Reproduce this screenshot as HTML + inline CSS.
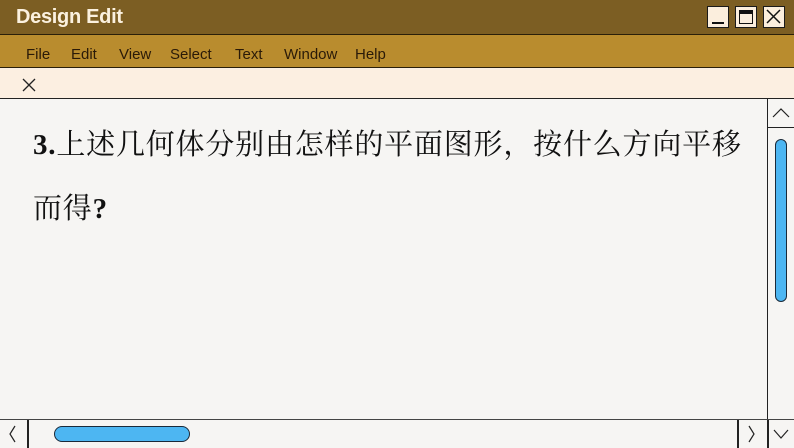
<!DOCTYPE html>
<html><head><meta charset="utf-8"><style>
*{margin:0;padding:0;box-sizing:border-box}
body{width:794px;height:447px;overflow:hidden;background:#f6f5f3;position:relative;font-family:"Liberation Sans",sans-serif}
.title{position:absolute;left:0;top:0;width:794px;height:35px;background:#7c5e23;border-bottom:1px solid #2a1f0a}
.title span{position:absolute;left:16px;top:6px;color:#fbf1df;font-weight:bold;font-size:20px;letter-spacing:-0.3px}
.btn{position:absolute;top:6px;width:22px;height:22px;background:#fbeedd;border:1.5px solid #1a1a1a}
.menu{position:absolute;left:0;top:35px;width:794px;height:33px;background:#b98c2e;border-bottom:1px solid #2a1f0a}
.menu span{position:absolute;top:11px;font-size:15px;color:#2a1a08}
.tool{position:absolute;left:0;top:68px;width:794px;height:31px;background:#fcefe1;border-bottom:1.5px solid #222}
.content{position:absolute;left:33px;top:113px;font-size:29px;line-height:64px;color:#111;font-family:"Liberation Serif","Noto Serif CJK SC",serif;letter-spacing:0.8px;white-space:nowrap}
.vs{position:absolute;left:767px;top:99px;width:27px;height:322px;border-left:1.5px solid #222}
.hs{position:absolute;left:0;top:419px;width:794px;height:28px;border-top:1.5px solid #444}
</style></head><body>
<div class="title"><span>Design Edit</span>
<div class="btn" style="left:707px"><div style="position:absolute;left:4px;right:4px;bottom:3px;height:2px;background:#111"></div></div>
<div class="btn" style="left:735px"><div style="position:absolute;left:3px;right:3px;top:3px;bottom:3px;border:1.5px solid #111;border-top-width:4px"></div></div>
<div class="btn" style="left:763px"><svg width="19" height="19" style="position:absolute;left:0;top:0"><path d="M3 3L16 16M16 3L3 16" stroke="#111" stroke-width="1.5"/></svg></div>
</div>
<div class="menu">
<span style="left:26px">File</span><span style="left:71px">Edit</span><span style="left:119px">View</span><span style="left:170px">Select</span><span style="left:235px">Text</span><span style="left:284px">Window</span><span style="left:355px">Help</span>
</div>
<div class="tool"><svg width="14" height="14" style="position:absolute;left:22px;top:10px"><path d="M1 1L13 13M13 1L1 13" stroke="#222" stroke-width="1.3"/></svg></div>
<div class="content"><b>3.</b>上述几何体分别由怎样的平面图形，按什么方向平移<br>而得<b>?</b></div>
<div class="vs">
<div style="position:absolute;left:0;top:0;width:26px;height:29px;border-bottom:1.5px solid #222"></div>
<svg width="26" height="28" style="position:absolute;left:0;top:0"><path d="M5 18L13 10L21 18" stroke="#222" stroke-width="1.2" fill="none"/></svg>
<div style="position:absolute;left:7px;top:40px;width:12px;height:163px;background:#4db6f2;border:1.3px solid #1a2a3a;border-radius:6px"></div>
</div>
<div class="hs">
<div style="position:absolute;left:27px;top:0;width:1.5px;height:28px;background:#222"></div>
<svg width="27" height="28" style="position:absolute;left:0;top:0"><path d="M15 6L10 14L15 22" stroke="#222" stroke-width="1.2" fill="none"/></svg>
<div style="position:absolute;left:54px;top:6px;width:136px;height:16px;background:#4db6f2;border:1.3px solid #1a2a3a;border-radius:8px"></div>
<div style="position:absolute;left:737px;top:0;width:1.5px;height:28px;background:#222"></div>
<svg width="30" height="28" style="position:absolute;left:738px;top:0"><path d="M11 6L16 14L11 22" stroke="#222" stroke-width="1.2" fill="none"/></svg>
<div style="position:absolute;left:767px;top:0;width:1.5px;height:28px;background:#222"></div>
<svg width="26" height="28" style="position:absolute;left:768px;top:0"><path d="M6 10L13 18L20 10" stroke="#222" stroke-width="1.2" fill="none"/></svg>
</div>
</body></html>
